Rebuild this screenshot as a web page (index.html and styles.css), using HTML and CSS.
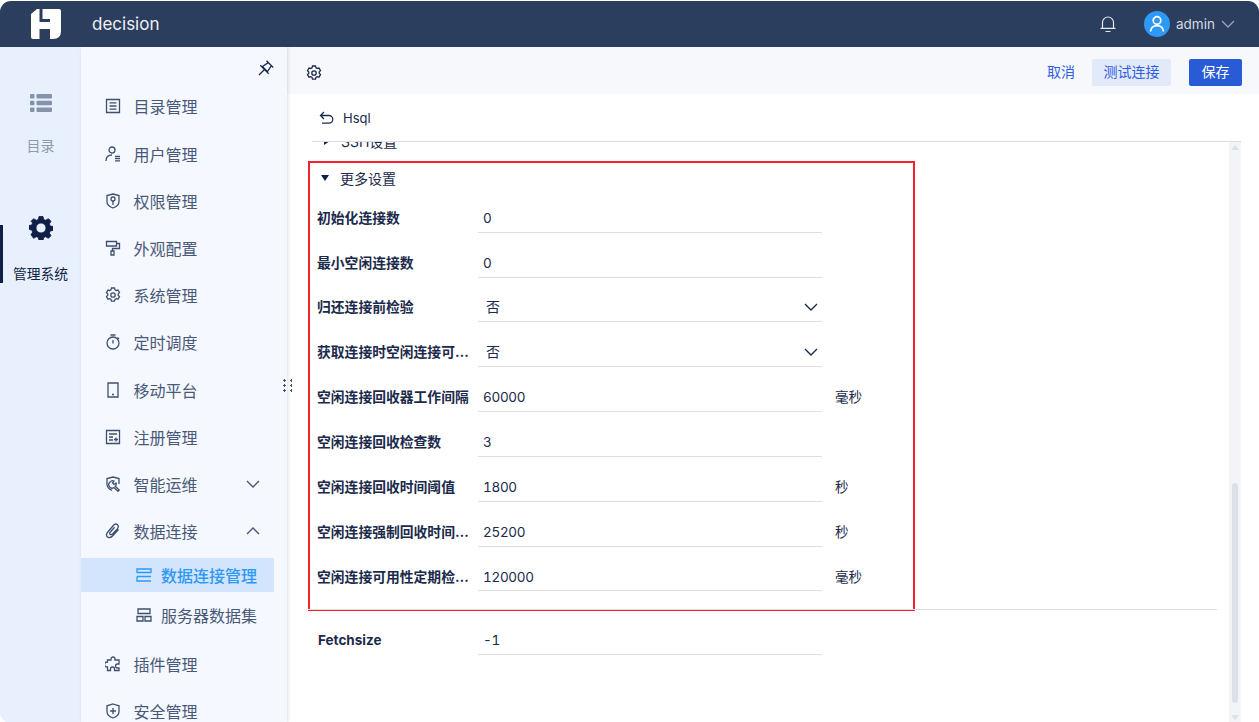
FILE: index.html
```html
<!DOCTYPE html>
<html lang="zh-CN">
<head>
<meta charset="utf-8">
<title>decision</title>
<link rel="stylesheet" href="styles.css">
</head>
<body>
<div class="app">
  <header class="topbar">
    <div class="logo-wrap">
      <svg class="logo" viewBox="0 0 30 30"><path fill="#fff" d="M0 5L6 0H8.500V13H19V10H11.500V0H28Q30 0 30 2V22Q30 30 22 30H19V20H8.500V30H2Q0 30 0 28Z"/></svg>
    </div>
    <span class="app-name">decision</span>
    <div class="top-right">
      <svg class="bell" viewBox="0 0 18 18" fill="none" stroke="#e4e7ee" stroke-width="1.200"><path d="M3.500 13V7.500a5.500 5.500 0 0 1 11 0V13M1.500 13.300h15M6.500 16.500h5"/></svg>
      <span class="avatar"><svg viewBox="0 0 26 26" fill="none" stroke="#fff" stroke-width="1.700"><circle cx="13" cy="9.500" r="3.800"/><path d="M6.500 20.500c.5-4 3-5.800 6.500-5.800s6 1.800 6.500 5.800"/></svg></span>
      <span class="user-name">admin</span>
      <svg class="user-caret" viewBox="0 0 14 8" fill="none" stroke="#9aa5b8" stroke-width="1.300"><path d="M1 1l6 6 6-6"/></svg>
    </div>
  </header>
  <div class="workspace">
    <aside class="rail">
      <div class="rail-item">
        <svg class="rail-icon" viewBox="0 0 24 20" fill="#8593a8"><rect x="1" width="4.500" height="4.500" rx="1" y="1"/><rect x="7.500" y="1" width="15.500" height="4.500" rx="1"/><rect x="1" y="7.700" width="4.500" height="4.500" rx="1"/><rect x="7.500" y="7.700" width="15.500" height="4.500" rx="1"/><rect x="1" y="14.400" width="4.500" height="4.500" rx="1"/><rect x="7.500" y="14.400" width="15.500" height="4.500" rx="1"/></svg>
        <span class="rail-label">目录</span>
      </div>
      <div class="rail-item rail-active">
        <svg class="rail-gear" viewBox="0 0 24 24"><path fill="#0f1f46" stroke="#0f1f46" stroke-width=".8" stroke-linejoin="round" fill-rule="evenodd" d="M10 .5h4l.7 3 2 .8 2.700-1.600L22 5.300l-1.600 2.600.8 2 2.800.7v3.800l-2.800.7-.8 2 1.600 2.600-2.600 2.600-2.700-1.600-2 .8-.7 3h-4l-.7-3-2-.8-2.700 1.600L2 18.700l1.600-2.600-.8-2-2.800-.7v-3.800l2.800-.7.800-2L2 5.300l2.600-2.600 2.700 1.600 2-.8zM12 7a5 5 0 1 0 0 10 5 5 0 0 0 0-10z"/></svg>
        <span class="rail-label">管理系统</span>
      </div>
    </aside>
    <nav class="sidenav">
      <div class="pin-row">
        <svg class="pin" viewBox="0 0 16 16" fill="none" stroke="#16294f" stroke-width="1.300"><path d="M8.500.8l6.700 6.700M10.300 2.600L4.400 6.500l5.100 5.100 3.900-5.900M2.300 5.300l8.400 8.400M6.500 9.500L1 15"/></svg>
      </div>
      <div class="nav-item"><svg class="nav-icon" viewBox="0 0 16 16"><path d="M1.500 1.500h13v13h-13zM4.500 4.800h7M4.500 8h7M4.500 11.200h7"/></svg><span>目录管理</span></div>
      <div class="nav-item"><svg class="nav-icon" viewBox="0 0 16 16"><circle cx="7" cy="4" r="3"/><path d="M1 15c0-4 2.500-6 6-6M10 10.500h5M10 12.700h5M10 14.900h5"/></svg><span>用户管理</span></div>
      <div class="nav-item"><svg class="nav-icon" viewBox="0 0 16 16"><path d="M8 1l6 1.500v6c0 3.500-3 5.500-6 6.500-3-1-6-3-6-6.500v-6z"/><circle cx="8" cy="6" r="2"/><path d="M8 8v4"/></svg><span>权限管理</span></div>
      <div class="nav-item"><svg class="nav-icon" viewBox="0 0 16 16"><path d="M1.500 1.500h10v4.500h-10zM11.500 3.500h3v5h-7v2.500M6 11h3v4H6z"/></svg><span>外观配置</span></div>
      <div class="nav-item"><svg class="nav-icon" viewBox="0 0 16 16"><path d="M6.500 1h3l.5 1.800 1.200.7 1.800-.5 1.500 2.600-1.300 1.300v1.400l1.300 1.300-1.500 2.600-1.800-.5-1.200.7-.5 1.800h-3l-.5-1.800-1.200-.7-1.800.5-1.500-2.600 1.300-1.300V7L1.500 5.600 3 3l1.800.5L6 2.800z"/><circle cx="8" cy="8" r="2.200"/></svg><span>系统管理</span></div>
      <div class="nav-item"><svg class="nav-icon" viewBox="0 0 16 16"><circle cx="8" cy="9" r="6"/><path d="M5.500 1h5M8 6v3.500M12.500 3.500l1.500 1.500"/></svg><span>定时调度</span></div>
      <div class="nav-item"><svg class="nav-icon" viewBox="0 0 16 16"><path d="M3 1h10v14H3zM7 12.500h2"/></svg><span>移动平台</span></div>
      <div class="nav-item"><svg class="nav-icon" viewBox="0 0 16 16"><path d="M1.500 1.500h13v13h-13zM4 5h8M4 8h4M4 11h4M11 8.500v4M9 10.500h4"/></svg><span>注册管理</span></div>
      <div class="nav-item"><svg class="nav-icon" viewBox="0 0 16 16"><path d="M8 1l6 1.500V8M8 1L2 2.500v6c0 3 2 4.500 5 6"/><path d="M5.200 6a3 3 0 0 1 3.800-1L7.500 7 9 8.500l2-1.500a3 3 0 0 1-.8 3.300l4 3.700-1.300 1.300-3.900-3.800A3 3 0 0 1 5.200 6z"/></svg><span>智能运维</span><svg class="nav-caret" viewBox="0 0 14 8"><path d="M1 1l6 6 6-6"/></svg></div>
      <div class="nav-item"><svg class="nav-icon" viewBox="0 0 16 16"><path d="M13.500 6.500L7.500 13c-1.500 1.700-4 2-5.200.8-1.200-1.300-.8-3.300.5-4.800l5.500-6.500c1.300-1.500 3-1.800 4.200-.8 1.200 1 1 2.800-.2 4.200L7.500 11c-.8.800-1.800 1-2.400.400-.600-.600-.400-1.600.3-2.400l4.100-4.700"/></svg><span>数据连接</span><svg class="nav-caret" viewBox="0 0 14 8"><path d="M1 7l6-6 6 6"/></svg></div>
      <div class="sub-list">
        <div class="sub-item sub-active"><svg class="sub-icon" viewBox="0 0 16 14"><path d="M1 1h14v3.500H1zM1 8.500h14M1 8.500V13h14"/></svg><span>数据连接管理</span></div>
        <div class="sub-item"><svg class="sub-icon" viewBox="0 0 16 14"><path d="M2 1h12v4.500H2zM1 8.500h6V13H1zM9 8.500h6V13H9z"/></svg><span>服务器数据集</span></div>
      </div>
      <div class="nav-item"><svg class="nav-icon" viewBox="0 0 16 16"><path d="M6 3a2 2 0 0 1 4 0v1h4v4h-1.500a2 2 0 0 0 0 4H14v2.500H9.500V13a2 2 0 0 0-4 0v1.500H2.500V11H2a2.500 2.500 0 0 1 0-5h.5V4H6z"/></svg><span>插件管理</span></div>
      <div class="nav-item"><svg class="nav-icon" viewBox="0 0 16 16"><path d="M8 1l6 1.800v5.700c0 3.500-3 5.500-6 6.500-3-1-6-3-6-6.500V2.800zM8 5v6M5 8h6"/></svg><span>安全管理</span></div>
      <span class="grip"></span>
    </nav>
    <main class="main">
      <div class="toolbar">
        <svg class="tool-gear" viewBox="0 0 16 16" fill="none" stroke="#1b2a4b" stroke-width="1.300"><path d="M6.500 1h3l.5 1.800 1.200.7 1.800-.5 1.500 2.600-1.300 1.300v1.400l1.300 1.300-1.500 2.600-1.800-.5-1.200.7-.5 1.800h-3l-.5-1.800-1.200-.7-1.800.5-1.500-2.600 1.300-1.300V7L1.500 5.600 3 3l1.800.5L6 2.800z"/><circle cx="8" cy="8" r="2.200"/></svg>
        <div class="tool-actions">
          <button class="btn btn-link">取消</button>
          <button class="btn btn-soft">测试连接</button>
          <button class="btn btn-primary">保存</button>
        </div>
      </div>
      <div class="back-row">
        <svg class="back-icon" viewBox="0 0 16 14" fill="none" stroke="#1b2a4b" stroke-width="1.300"><path d="M5 1L1.500 4.500 5 8M1.500 4.500H10a3.800 3.800 0 0 1 0 7.600H3"/></svg>
        <span>Hsql</span>
      </div>
      <div class="content-area">
        <div class="form-scroll">
          <div class="section-title clipped"><i class="tri tri-right"></i><span>SSH设置</span></div>
          <section class="marked">
            <div class="section-title"><i class="tri tri-down"></i><span>更多设置</span></div>
            <div class="row"><label>初始化连接数</label><div class="field">0</div></div>
            <div class="row row-short"><label>最小空闲连接数</label><div class="field">0</div></div>
            <div class="row"><label>归还连接前检验</label><div class="field field-select">否<svg viewBox="0 0 14 8" fill="none" stroke="#1b2a4b" stroke-width="1.400"><path d="M1 1l6 6 6-6"/></svg></div></div>
            <div class="row"><label>获取连接时空闲连接可用性检验</label><div class="field field-select">否<svg viewBox="0 0 14 8" fill="none" stroke="#1b2a4b" stroke-width="1.400"><path d="M1 1l6 6 6-6"/></svg></div></div>
            <div class="row"><label>空闲连接回收器工作间隔</label><div class="field">60000</div><em>毫秒</em></div>
            <div class="row"><label>空闲连接回收检查数</label><div class="field">3</div></div>
            <div class="row"><label>空闲连接回收时间阈值</label><div class="field">1800</div><em>秒</em></div>
            <div class="row"><label>空闲连接强制回收时间阈值</label><div class="field">25200</div><em>秒</em></div>
            <div class="row"><label>空闲连接可用性定期检查间隔</label><div class="field field-short">120000</div><em>毫秒</em></div>
          </section>
          <div class="divider"></div>
          <div class="row row-plain"><label>Fetchsize</label><div class="field">-1</div></div>
        </div>
        <div class="scrollbar"><i class="arrow-up"></i><i class="thumb"></i><i class="arrow-down"></i></div>
      </div>
    </main>
  </div>
</div>
</body>
</html>
```
FILE: styles.css
```css
* { box-sizing: border-box; }
html, body { margin: 0; height: 100%; background: #fff; overflow: hidden; }
body { font-family: Inter, "Noto Sans CJK SC", sans-serif; font-size: 14px; color: #0f1f46; }
.app { height: 722px; display: flex; flex-direction: column; border-radius: 11px 11px 0 11px; overflow: hidden; margin-top: 1px; }
.topbar { height: 46px; flex: none; background: #2c3e5d; display: flex; align-items: center; color: #fff; }
.logo-wrap { width: 92px; padding-left: 31px; display: flex; }
.logo { width: 30px; height: 30px; }
.app-name { font-size: 17px; color: #eef1f6; }
.top-right { margin-left: auto; display: flex; align-items: center; padding-right: 24px; }
.bell { width: 18px; height: 18px; margin-right: 27px; }
.avatar { width: 26px; height: 26px; border-radius: 50%; background: #2e98f5; display: flex; }
.user-name { font-size: 13.500px; margin-left: 6px; color: #d5dae4; width: 45px; }
.user-caret { width: 14px; height: 8px; }
.workspace { flex: 1; display: flex; min-height: 0; }
.rail { width: 81px; flex: none; background: #e9f0fd; padding-top: 46px; }
.rail-item { display: flex; flex-direction: column; align-items: center; }
.rail-icon { width: 24px; height: 20px; }
.rail-label { font-size: 14px; color: #8d99ad; line-height: 20px; margin-top: 23px; }
.rail-active { margin-top: 69px; height: 58px; border-left: 3px solid #0f1f46; padding-right: 3px; }
.rail-gear { width: 24px; height: 24px; flex: none; margin-top: -9px; }
.rail-active .rail-label { color: #0f1f46; font-size: 13.800px; margin-top: 24px; white-space: nowrap; }
.sidenav { width: 206px; flex: none; background: #f5f8fe; box-shadow: 1px 0 3px rgba(30,50,90,.16); position: relative; z-index: 1; }
.pin-row { height: 35.800px; display: flex; justify-content: flex-end; padding: 13px 13px 0 0; }
.pin { width: 16px; height: 16px; }
.nav-item { height: 47.200px; display: flex; align-items: center; padding-left: 24px; color: #495878; font-size: 16px; position: relative; }
.nav-icon { width: 16px; height: 16px; fill: none; stroke: #3f4f70; stroke-width: 1.300; margin-right: 12.500px; flex: none; }
.nav-caret { width: 14px; height: 8px; fill: none; stroke: #495878; stroke-width: 1.400; position: absolute; right: 27px; top: 20px; }
.sub-list { padding: 3.700px 0 2px; }
.sub-item { height: 34px; width: 193px; display: flex; align-items: center; padding-left: 55px; font-size: 16px; color: #495878; margin-bottom: 6px; white-space: nowrap; }
.sub-icon { width: 16px; height: 14px; fill: none; stroke: #3f4f70; stroke-width: 1.300; margin-right: 9px; flex: none; }
.sub-active { background: #d2e5fd; color: #2e98f5; font-weight: 500; }
.sub-active .sub-icon { stroke: #2e98f5; }
.grip { position: absolute; right: -5px; top: 331px; width: 9px; height: 15px; background-image: radial-gradient(circle, #40506e 1px, transparent 1.100px); background-size: 7px 5px; background-position: -2px 0; }
.main { flex: 1; min-width: 0; display: flex; flex-direction: column; background: #fff; }
.toolbar { height: 47px; flex: none; background: #f7f8fc; display: flex; align-items: center; padding: 3px 17px 0 19px; }
.tool-gear { width: 16px; height: 16px; margin-top: 1px; }
.tool-actions { margin-left: auto; display: flex; align-items: center; }
.btn { height: 27px; border: 0; border-radius: 2px; font: inherit; font-size: 14px; padding: 0 0 2px; }
.btn-link { width: 46px; background: none; color: #2f5fe0; margin-right: 8px; }
.btn-soft { width: 79px; background: #e2e9f8; color: #2f5fe0; margin-right: 18px; }
.btn-primary { width: 53px; background: #2a5bd7; color: #fff; }
.back-row { height: 48px; flex: none; margin-left: 25px; border-bottom: 1px solid #dcdee2; display: flex; align-items: center; margin-right: 18px; font-size: 13px; color: #1b2a4b; padding-left: 7px; }
.back-icon { width: 16px; height: 14px; margin-right: 8px; }
.content-area { flex: 1; min-height: 0; display: flex; }
.form-scroll { flex: 1; min-width: 0; overflow: hidden; padding: 0 42px 0 21px; }
.section-title { height: 20px; display: flex; align-items: center; font-size: 14px; padding-left: 13px; color: #1b2a4b; }
.clipped { margin-top: -11px; }
.tri { width: 0; height: 0; margin-right: 10px; border-style: solid; flex: none; }
.tri-down { border-width: 6px 4.500px 0; border-color: #0f1f46 transparent transparent; margin-right: 11px; }
.tri-right { border-width: 4.500px 0 4.500px 6px; border-color: transparent transparent transparent #0f1f46; margin-left: 3px; margin-right: 11px; }
.marked { width: 607px; height: 450px; margin-top: 10px; border: 2px solid #f5222d; padding: 5px 0 0 7px; }
.row { height: 45px; display: flex; align-items: flex-start; padding-top: 10px; }
.row-short { height: 44px; }
.marked .section-title { margin-bottom: 8px; padding-left: 4px; }
.row label { width: 161px; flex: none; padding-right: 8px; font-weight: 700; font-size: 13.800px; line-height: 24px; white-space: nowrap; overflow: hidden; text-overflow: ellipsis; color: #1b2a4b; }
.field { width: 344px; height: 27px; flex: none; border-bottom: 1px solid #dcdee2; padding-left: 5px; font-size: 13.500px; letter-spacing: -.3px; font-variant-numeric: tabular-nums; line-height: 24px; color: #1b2a4b; }
.field-short { height: 26px; }
.field-select { padding: 0 4px 2px 8px; display: flex; align-items: center; justify-content: space-between; font-size: 14px; letter-spacing: 0; }
.field-select svg { width: 14px; height: 8px; }
.row em { font-style: normal; font-size: 13.500px; margin-left: 13px; line-height: 24px; color: #1b2a4b; }
.divider { height: 1px; background: #dcdee2; width: 909px; margin-top: -2px; }
.row-plain { padding-left: 10px; margin-top: 8px; }
.row-plain label { width: 160px; font-size: 13.500px; }
.scrollbar { width: 12px; flex: none; background: #f3f4f8; margin-right: 18px; position: relative; }
.thumb { position: absolute; left: 3px; top: 341px; width: 6px; height: 220px; background: #dce0e7; border-radius: 3px; }
.arrow-up, .arrow-down { position: absolute; left: 2px; width: 0; height: 0; border-style: solid; }
.arrow-up { top: 3px; border-width: 0 4px 5px; border-color: transparent transparent #dce0e7; }
.arrow-down { bottom: 3px; border-width: 5px 4px 0; border-color: #dce0e7 transparent transparent; }
```
